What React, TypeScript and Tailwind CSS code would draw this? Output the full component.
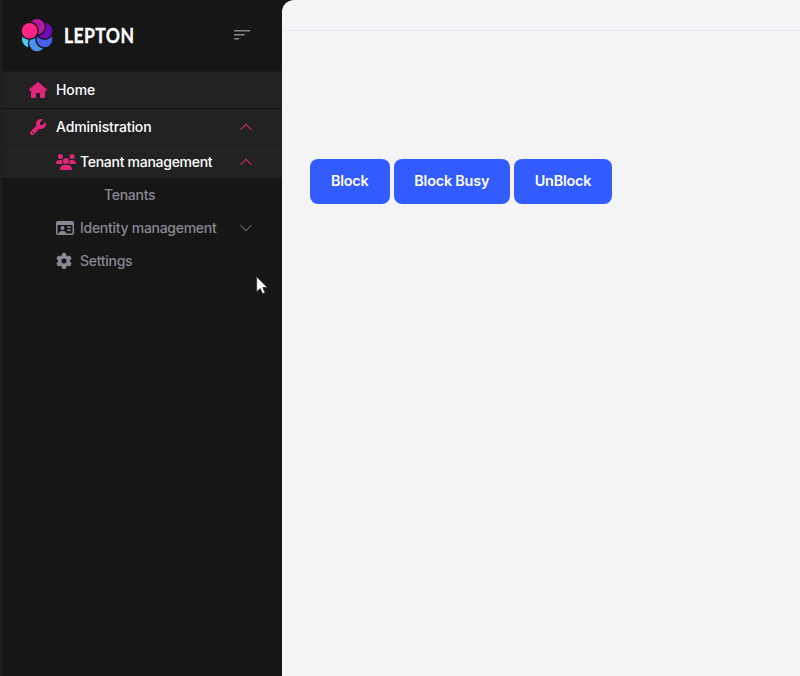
import React from "react";
import { FaHouse, FaWrench, FaUsers, FaRegIdCard, FaGear } from "react-icons/fa6";

const petals = [
  { x: 29.8, y: 39.4, fill: "#4cc9f0" },
  { x: 37, y: 43.5, fill: "#4895ef" },
  { x: 44.5, y: 39.4, fill: "#4361ee" },
  { x: 44.5, y: 30.8, fill: "#7209b7" },
  { x: 37, y: 26.7, fill: "#b5179e" },
  { x: 29.6, y: 30.8, fill: "#ff2485" },
];

function Logo() {
  return (
    <svg className="mb-[2px] h-[34px] w-[32px]" viewBox="21 18 32 34">
      {petals.map((p) => (
        <g key={p.fill}>
          <circle cx={p.x} cy={p.y} r="9.2" fill="#161616" />
          <circle cx={p.x} cy={p.y} r="7.8" fill={p.fill} />
        </g>
      ))}
    </svg>
  );
}

function Chevron({ down = false }: { down?: boolean }) {
  return (
    <svg
      className={down ? "ml-auto mr-[30px] h-2 w-3 text-[#62626a]" : "ml-auto mr-[30px] h-2 w-3 text-[#c72a6d]"}
      viewBox="0 0 12 8"
      fill="none"
      stroke="currentColor"
      strokeWidth="1.1"
    >
      <path d={down ? "M.5 1.2 6 6.7 11.5 1.2" : "M.5 6.8 6 1.3 11.5 6.8"} />
    </svg>
  );
}

function Sidebar() {
  return (
    <aside className="flex w-[282px] flex-col border-l-2 border-[#1f1f1f] bg-[#161616] text-[14px] font-medium tracking-[-0.28px] text-[#888894]">
      <div className="flex h-[72px] items-center border-b border-[#1c1c1c] pl-[19px]">
        <Logo />
        <svg className="ml-[11px] h-[32px] w-[76px] overflow-visible" viewBox="0 0 76 32">
          <text
            x="0"
            y="23"
            transform="scale(0.86 1)"
            textLength="81.5"
            lengthAdjust="spacing"
            className="fill-white stroke-white stroke-[0.3px] font-['Lato'] text-[20.5px] font-bold tracking-normal"
          >
            LEPTON
          </text>
        </svg>
        <svg className="mb-[2px] ml-auto mr-[32px] h-3 w-4" viewBox="0 0 16 12" fill="#85858f">
          <rect width="16" height="1.5" y="1" />
          <rect width="10.5" height="1.5" y="5" />
          <rect width="5" height="1.5" y="9" />
        </svg>
      </div>
      <nav className="flex flex-col">
        <div className="flex h-[37px] items-center border-b border-[#151515] bg-[#222222] pl-[27px] tracking-[-0.12px] text-white">
          <FaHouse className="mr-[9px] h-4 w-[18px] text-[#e0257a]" />
          <span className="pb-0.5">Home</span>
        </div>
        <div className="flex h-[37px] items-center border-b border-[#1c1c1c] bg-[#222222] pl-[27px] tracking-[-0.12px] text-white">
          <FaWrench className="mr-[9px] h-4 w-[18px] text-[#e0257a]" />
          <span className="pb-0.5">Administration</span>
          <Chevron />
        </div>
        <div className="flex h-8 items-center bg-[#222222] pl-[54px] text-white">
          <FaUsers className="mr-1 size-5 text-[#e0257a]" />
          <span className="pb-0.5">Tenant management</span>
          <Chevron />
        </div>
        <div className="flex h-[33px] items-center pl-[102px]">Tenants</div>
        <div className="flex h-[33px] items-center pl-[54px]">
          <FaRegIdCard className="mr-[6px] h-4 w-[18px]" />
          <span>Identity management</span>
          <Chevron down />
        </div>
        <div className="flex h-[33px] items-center pl-[54px]">
          <FaGear className="mr-2 size-4" />
          <span>Settings</span>
        </div>
      </nav>
    </aside>
  );
}

const button =
  "h-[44.5px] rounded-lg bg-[#325cff] pb-px text-[14.4px] font-semibold tracking-[-0.2px] text-white";

export default function App() {
  return (
    <div className="relative flex h-[676px] w-[800px] overflow-hidden bg-[#161616] font-['Inter',sans-serif]">
      <Sidebar />
      <main className="flex-1 rounded-tl-[12px] bg-[#f4f4f6]">
        <header className="h-[31px] border-b border-[#e9e9ee]" />
        <div className="flex gap-1 pl-7 pt-32">
          <button className={`${button} w-[79.5px]`}>Block</button>
          <button className={`${button} w-[116.5px]`}>Block Busy</button>
          <button className={`${button} w-[98px]`}>UnBlock</button>
        </div>
      </main>
      <svg className="absolute left-[256px] top-[276px] h-[19px] w-3" viewBox="0 0 12 19">
        <path d="M.7.8v15l3.5-3.3 2.4 5.2 2.5-1.2-2.4-5h4.6Z" fill="#fff" stroke="#333" strokeWidth=".8" />
      </svg>
    </div>
  );
}
